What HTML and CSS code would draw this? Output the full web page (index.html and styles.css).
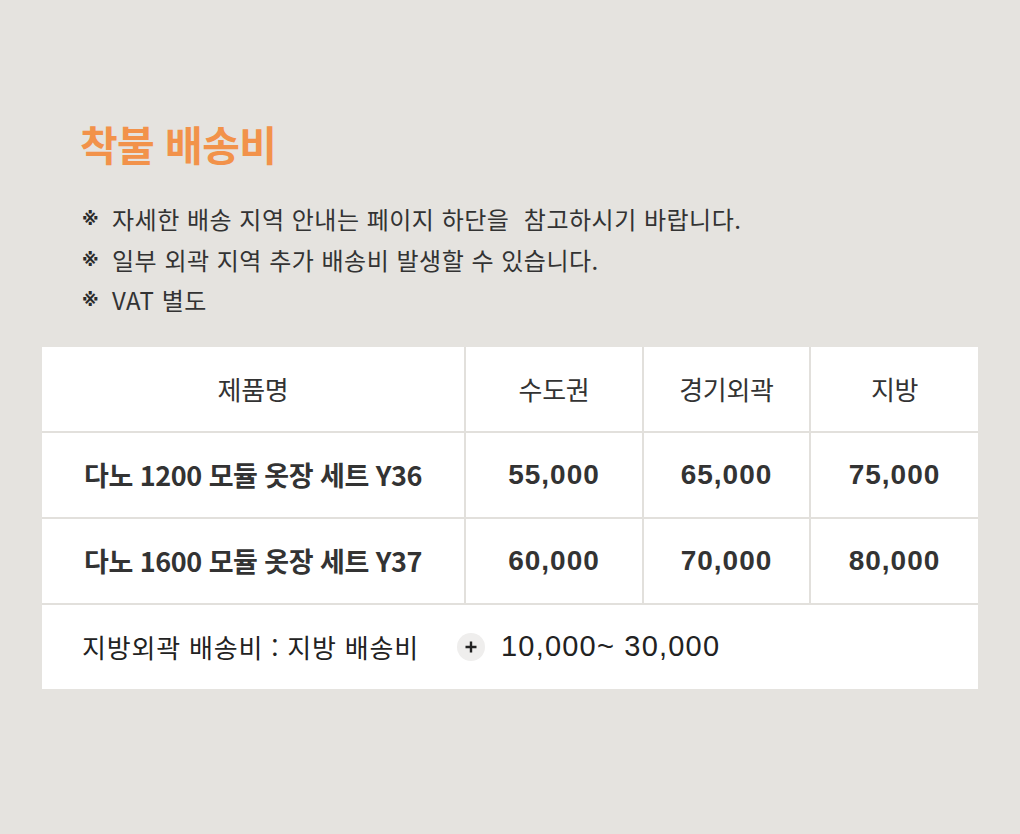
FILE: index.html
```html
<!DOCTYPE html>
<html lang="ko">
<head>
<meta charset="utf-8">
<title>착불 배송비</title>
<link rel="stylesheet" href="styles.css">
</head>
<body>
<main class="page">
  <h1 class="title">착불 배송비</h1>
  <ul class="notes">
    <li><span class="mark">※</span>자세한 배송 지역 안내는 페이지 하단을&nbsp; 참고하시기 바랍니다.</li>
    <li><span class="mark">※</span>일부 외곽 지역 추가 배송비 발생할 수 있습니다.</li>
    <li><span class="mark">※</span>VAT 별도</li>
  </ul>
  <div class="grid">
    <div class="cell head">제품명</div>
    <div class="cell head">수도권</div>
    <div class="cell head">경기외곽</div>
    <div class="cell head">지방</div>

    <div class="cell name">다노 1200 모듈 옷장 세트 Y36</div>
    <div class="cell num">55,000</div>
    <div class="cell num">65,000</div>
    <div class="cell num">75,000</div>

    <div class="cell name">다노 1600 모듈 옷장 세트 Y37</div>
    <div class="cell num">60,000</div>
    <div class="cell num">70,000</div>
    <div class="cell num">80,000</div>

    <div class="cell foot">
      <span class="foot-label">지방외곽 배송비 : 지방 배송비</span>
      <span class="plus"><svg width="14" height="14" viewBox="0 0 14 14"><path d="M7 1.5v11M1.5 7h11" stroke="#222" stroke-width="2.4" stroke-linecap="butt"/></svg></span>
      <span class="foot-value">10,000~ 30,000</span>
    </div>
  </div>
</main>
</body>
</html>
```
FILE: styles.css
```css
html, body {
  margin: 0;
  padding: 0;
}
body {
  background: #e5e3df;
  font-family: "Noto Sans CJK KR", "Noto Sans", sans-serif;
  color: #333;
}
.page {
  padding: 119px 42px 0 42px;
}
.title {
  margin: 0 0 0 38px;
  font-size: 41px;
  line-height: 48px;
  font-weight: 700;
  letter-spacing: -0.6px;
  color: #f2924a;
}
.notes {
  list-style: none;
  margin: 32px 0 26px 40px;
  padding: 0;
}
.notes li {
  font-size: 24px;
  line-height: 40.5px;
  letter-spacing: 0.5px;
  color: #333;
  display: flex;
  align-items: center;
}
.mark {
  font-family: "DejaVu Sans", sans-serif;
  font-size: 17px;
  width: 30px;
  font-weight: 700;
  color: #2a2a2a;
  letter-spacing: 0;
}
.grid {
  display: grid;
  grid-template-columns: 422px 176px 165px 167px;
  grid-auto-rows: 84px;
  gap: 2px;
  background: #e2e0dc;
  width: 936px;
}
.cell {
  background: #fff;
  display: flex;
  align-items: center;
  justify-content: center;
  color: #333;
}
.head {
  font-size: 26px;
  letter-spacing: -0.3px;
  font-weight: 400;
}
.name {
  font-size: 27px;
  font-weight: 700;
  letter-spacing: -0.5px;
  color: #333;
}
.num {
  font-family: "Liberation Sans", "Noto Sans CJK KR", sans-serif;
  font-size: 28px;
  font-weight: 700;
  letter-spacing: 1px;
  color: #333;
}
.foot {
  grid-column: 1 / -1;
  justify-content: flex-start;
  padding-left: 40px;
}
.foot-label {
  font-size: 26px;
  letter-spacing: 0.8px;
  color: #222;
}
.plus {
  width: 28px;
  height: 28px;
  border-radius: 50%;
  background: #efeeed;
  display: flex;
  align-items: center;
  justify-content: center;
  margin-left: 38px;
  margin-right: 16px;
}
.foot-value {
  font-family: "Liberation Sans", "Noto Sans CJK KR", sans-serif;
  font-size: 29px;
  letter-spacing: 1.2px;
  color: #222;
}
```
